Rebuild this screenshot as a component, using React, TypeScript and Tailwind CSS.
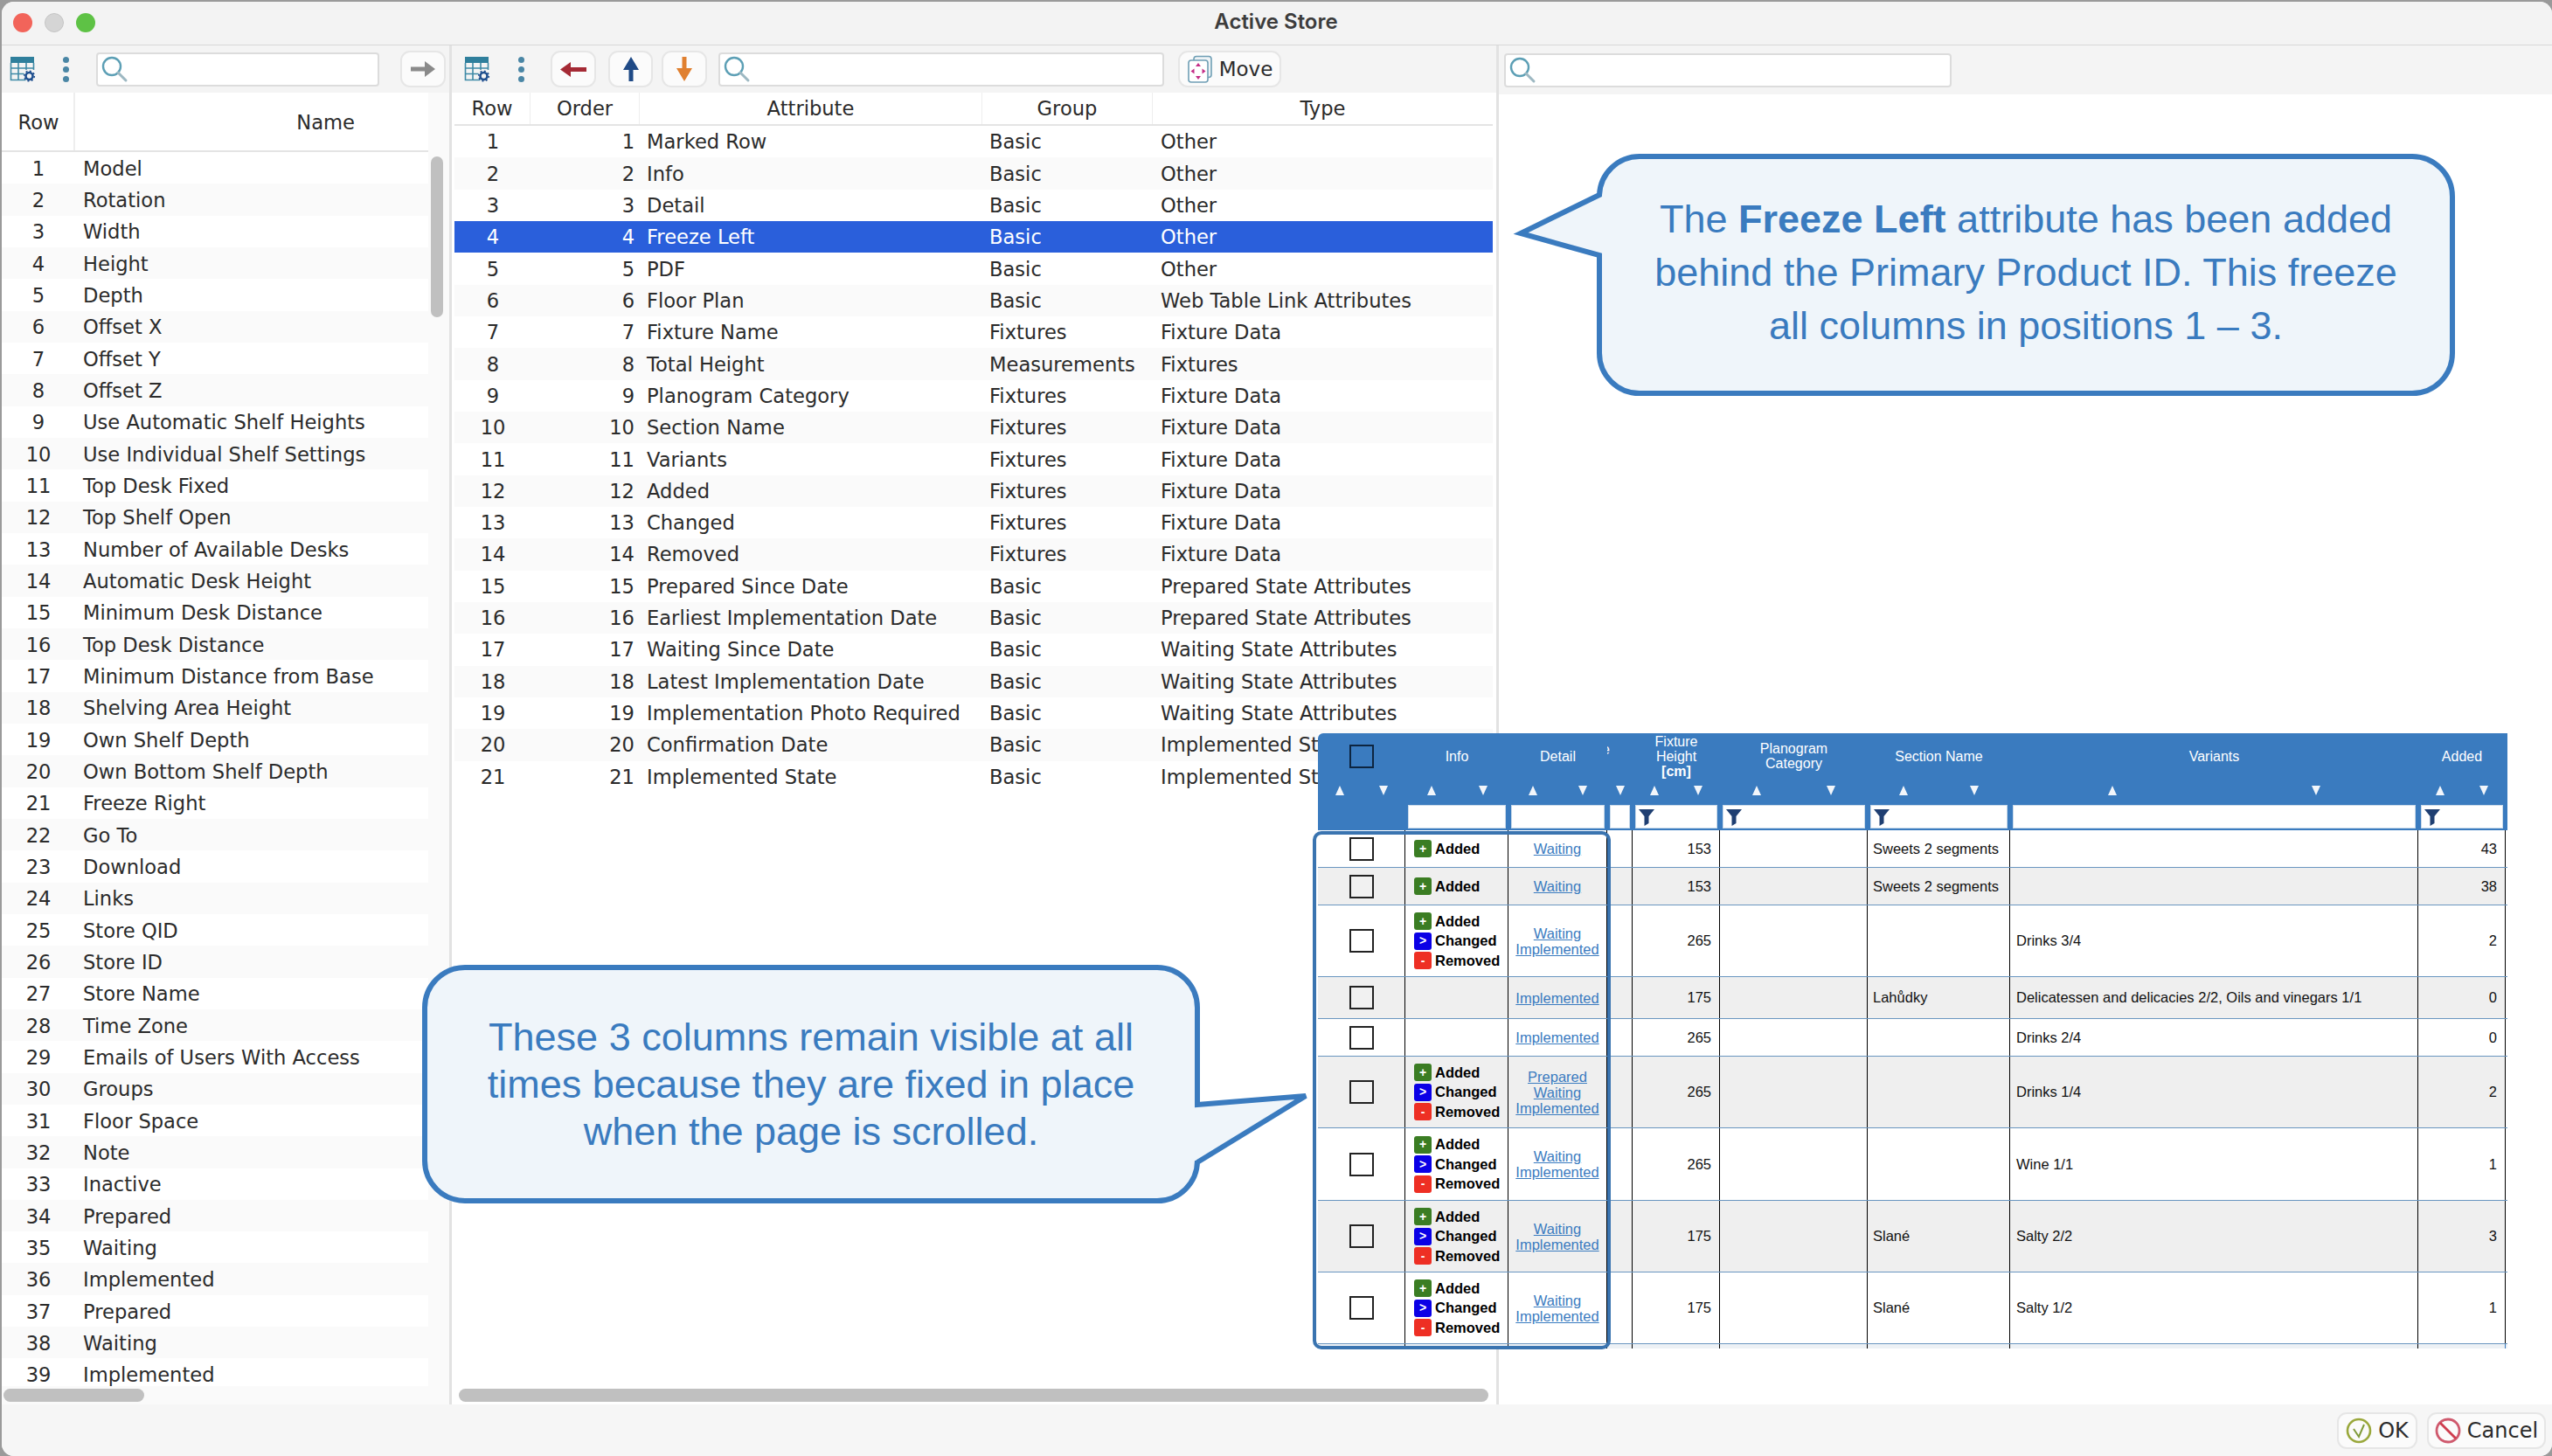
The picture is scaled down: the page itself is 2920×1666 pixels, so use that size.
const leftRows = ["Model","Rotation","Width","Height","Depth","Offset X","Offset Y","Offset Z","Use Automatic Shelf Heights","Use Individual Shelf Settings","Top Desk Fixed","Top Shelf Open","Number of Available Desks","Automatic Desk Height","Minimum Desk Distance","Top Desk Distance","Minimum Distance from Base","Shelving Area Height","Own Shelf Depth","Own Bottom Shelf Depth","Freeze Right","Go To","Download","Links","Store QID","Store ID","Store Name","Time Zone","Emails of Users With Access","Groups","Floor Space","Note","Inactive","Prepared","Waiting","Implemented","Prepared","Waiting","Implemented"];

const midRows = [
  ["Marked Row","Basic","Other"],["Info","Basic","Other"],["Detail","Basic","Other"],["Freeze Left","Basic","Other"],["PDF","Basic","Other"],
  ["Floor Plan","Basic","Web Table Link Attributes"],["Fixture Name","Fixtures","Fixture Data"],["Total Height","Measurements","Fixtures"],
  ["Planogram Category","Fixtures","Fixture Data"],["Section Name","Fixtures","Fixture Data"],["Variants","Fixtures","Fixture Data"],["Added","Fixtures","Fixture Data"],
  ["Changed","Fixtures","Fixture Data"],["Removed","Fixtures","Fixture Data"],["Prepared Since Date","Basic","Prepared State Attributes"],
  ["Earliest Implementation Date","Basic","Prepared State Attributes"],["Waiting Since Date","Basic","Waiting State Attributes"],["Latest Implementation Date","Basic","Waiting State Attributes"],
  ["Implementation Photo Required","Basic","Waiting State Attributes"],["Confirmation Date","Basic","Implemented State Attributes"],["Implemented State","Basic","Implemented State Attributes"],
];

const shotCols = "grid grid-cols-[100px_118px_113px_29px_100px_169px_163px_467px_100px]";

const shotRows = [
  { h: "h-[43px]", badges: 1, links: ["Waiting"], height: 153, section: "Sweets 2 segments", variants: "", added: 43 },
  { h: "h-[43px]", badges: 1, links: ["Waiting"], height: 153, section: "Sweets 2 segments", variants: "", added: 38 },
  { h: "h-[82px]", badges: 3, links: ["Waiting","Implemented"], height: 265, section: "", variants: "Drinks 3/4", added: 2 },
  { h: "h-[48px]", badges: 0, links: ["Implemented"], height: 175, section: "Lahůdky", variants: "Delicatessen and delicacies 2/2, Oils and vinegars 1/1", added: 0 },
  { h: "h-[43px]", badges: 0, links: ["Implemented"], height: 265, section: "", variants: "Drinks 2/4", added: 0 },
  { h: "h-[82px]", badges: 3, links: ["Prepared","Waiting","Implemented"], height: 265, section: "", variants: "Drinks 1/4", added: 2 },
  { h: "h-[83px]", badges: 3, links: ["Waiting","Implemented"], height: 265, section: "", variants: "Wine 1/1", added: 1 },
  { h: "h-[82px]", badges: 3, links: ["Waiting","Implemented"], height: 175, section: "Slané", variants: "Salty 2/2", added: 3 },
  { h: "h-[82px]", badges: 3, links: ["Waiting","Implemented"], height: 175, section: "Slané", variants: "Salty 1/2", added: 1 },
];

function TableIcon() {
  return (
    <svg width="30" height="30" viewBox="0 0 30 30" className="shrink-0">
      <rect x="1" y="1" width="27" height="7" fill="#2f7f9c" />
      <path d="M1.5 8v19.5h17M1.5 14h26M1.5 20.5h15M10 8v19M19 8v8M27.5 8v8" fill="none" stroke="#3f8aa6" strokeWidth="1.6" />
      <circle cx="22.5" cy="23" r="4" fill="none" stroke="#1f4f8f" strokeWidth="2.6" />
      <circle cx="22.5" cy="23" r="5.8" fill="none" stroke="#1f4f8f" strokeWidth="1.6" strokeDasharray="2 2.5" />
    </svg>
  );
}

function Dots() {
  return (
    <div className="flex flex-col gap-[4px] shrink-0">
      <div className="w-[7px] h-[7px] rounded-full bg-[#4a86a5]" />
      <div className="w-[7px] h-[7px] rounded-full bg-[#4a86a5]" />
      <div className="w-[7px] h-[7px] rounded-full bg-[#4a86a5]" />
    </div>
  );
}

function SearchBox({ className }: { className: string }) {
  return (
    <div className={`h-[39px] bg-white border-2 border-[#dcdcdc] rounded-[4px] flex items-center pl-[3px] shrink-0 ${className}`}>
      <svg width="32" height="32" viewBox="0 0 32 32">
        <circle cx="13" cy="13" r="10" fill="none" stroke="#5c9fb5" strokeWidth="2.4" />
        <path d="M20 20l9 9" stroke="#9db8c2" strokeWidth="3" strokeLinecap="round" />
      </svg>
    </div>
  );
}

function ToolButton({ className, children }: { className: string; children: React.ReactNode }) {
  return (
    <div className={`h-[42px] bg-[#fbfbfb] border-2 border-[#e6e6e6] rounded-[11px] flex items-center justify-center shrink-0 ${className}`}>
      {children}
    </div>
  );
}

function MoveIcon() {
  return (
    <svg width="30" height="32" viewBox="0 0 30 32">
      <rect x="8" y="1.5" width="20" height="24" rx="3" fill="#eef3f6" stroke="#6f9fb5" strokeWidth="1.6" />
      <rect x="2" y="6" width="22" height="25" rx="3" fill="#fff" stroke="#6f9fb5" strokeWidth="1.6" />
      <path d="M13 9l3 4h-6zM13 28l3-4h-6zM4.500 18.500l4-3v6zM21.500 18.500l-4-3v6z" fill="#c42c86" />
    </svg>
  );
}

function Funnel() {
  return (
    <svg width="18" height="19" viewBox="0 0 18 19" className="absolute left-[3px] top-[4px]">
      <path d="M0 0h18l-6.500 8v8l-5 3V8z" fill="#1f3f72" />
    </svg>
  );
}

function Sort({ up }: { up?: boolean }) {
  return (
    <svg width="10" height="11" viewBox="0 0 10 11">
      <path d={up ? "M5 0l5 11H0z" : "M0 0h10L5 11z"} fill="#f2f6fb" />
    </svg>
  );
}

function SortCell({ hideUp }: { hideUp?: boolean }) {
  return (
    <div className="flex justify-around items-center h-[26px]">
      {!hideUp && <Sort up />}
      <Sort />
    </div>
  );
}

function FilterCell({ funnel }: { funnel?: boolean }) {
  return (
    <div className="relative mx-[3px] h-[27px] bg-white border border-[#c9daea]">
      {funnel && <Funnel />}
    </div>
  );
}

function Badge({ kind }: { kind: number }) {
  const label = ["Added", "Changed", "Removed"][kind];
  const sign = ["+", ">", "-"][kind];
  const color = ["bg-[#3b7d23]", "bg-[#0b00e6]", "bg-[#ee2f24]"][kind];
  return (
    <div className="flex items-center h-[22.500px]">
      <div className={`w-[20px] h-[20px] rounded-[3px] text-white text-[14px] font-bold flex items-center justify-center ${color}`}>{sign}</div>
      <span className="ml-[4px] text-[16.500px] font-bold text-black">{label}</span>
    </div>
  );
}

function Shot() {
  const head = "flex items-center justify-center text-center text-white text-[16px] leading-[17px] h-[52px]";
  return (
    <div className="absolute left-[1508px] top-[839px] w-[1361px] h-[704px] bg-white overflow-hidden font-['Liberation_Sans',sans-serif]">
      <div className="bg-[#3a7bbf] h-[111px] rounded-tl-[6px]">
        <div className={shotCols}>
          <div className={head}><div className="w-[28px] h-[27px] border-2 border-[#0d2540]" /></div>
          <div className={head}>Info</div>
          <div className={head}>Detail</div>
          <div className="h-[52px] overflow-hidden text-white text-[16px] leading-[17px] pt-[10px]"><span className="block -ml-[6px]">e</span></div>
          <div className={head}><div className="w-[60px]">Fixture Height <b>[cm]</b></div></div>
          <div className={head}><div className="w-[100px]">Planogram Category</div></div>
          <div className={head}>Section Name</div>
          <div className={head}>Variants</div>
          <div className={head}>Added</div>
        </div>
        <div className={shotCols}>
          <SortCell /><SortCell /><SortCell /><SortCell hideUp /><SortCell /><SortCell /><SortCell /><SortCell /><SortCell />
        </div>
        <div className={`${shotCols} pt-[4px]`}>
          <div />
          <FilterCell /><FilterCell /><FilterCell /><FilterCell funnel /><FilterCell funnel /><FilterCell funnel /><FilterCell /><FilterCell funnel />
        </div>
      </div>
      {shotRows.map((r, i) => {
        const cell = `border-r border-black flex items-center text-[16.500px] text-[#111] ${i % 2 ? "bg-[#efefef]" : "bg-white"}`;
        return (
          <div key={i} className={`${shotCols} ${r.h} border-b border-[#6a96c0]`}>
            <div className={`${cell} justify-center`}>
              <div className={`w-[28px] h-[27px] border-2 border-[#222] ${i % 2 ? "bg-[#f1f1f1]" : "bg-white"}`} />
            </div>
            <div className={`${cell} pl-[10px]`}>
              <div>
                {Array.from({ length: r.badges }).map((_, k) => <Badge key={k} kind={k} />)}
              </div>
            </div>
            <div className={`${cell} justify-center`}>
              <div className="text-center text-[16.500px] leading-[18px] text-[#3a7bbf] underline">
                {r.links.map((l) => <div key={l}>{l}</div>)}
              </div>
            </div>
            <div className={cell} />
            <div className={`${cell} justify-end pr-[9px]`}>{r.height}</div>
            <div className={cell} />
            <div className={`${cell} pl-[6px]`}>{r.section}</div>
            <div className={`${cell} pl-[7px]`}>{r.variants}</div>
            <div className={`${cell} justify-end pr-[9px] border-[#3a7bbf]`}>{r.added}</div>
          </div>
        );
      })}
      <div className={`${shotCols} h-[5px] bg-[#edf1f5]`}>
        <div className="border-r border-black" /><div className="border-r border-black" /><div className="border-r border-black" />
        <div className="border-r border-black" /><div className="border-r border-black" /><div className="border-r border-black" />
        <div className="border-r border-black" /><div className="border-r border-black" /><div className="border-r border-[#3a7bbf]" />
      </div>
    </div>
  );
}

export default function App() {
  const rowText = "font-['DejaVu_Sans',sans-serif] text-[22.600px] text-[#2b2b2b]";
  return (
    <div className="w-[2920px] h-[1666px] bg-[#9a9a9a] overflow-hidden relative">
      <div className="w-[2918px] h-[1664px] ml-[2px] mt-[2px] rounded-[14px] overflow-hidden bg-[#f6f6f6] flex flex-col">
        {/* title bar */}
        <div className="h-[50px] bg-[#f3f3f3] border-b border-[#d8d8d8] flex items-center relative shrink-0">
          <div className="flex gap-[14px] pl-[13px] -mt-[2px]">
            <div className="w-[22px] h-[22px] rounded-full bg-[#f2645a]" />
            <div className="w-[22px] h-[22px] rounded-full bg-[#d5d5d5] border border-[#c4c4c4]" />
            <div className="w-[22px] h-[22px] rounded-full bg-[#5ec245]" />
          </div>
          <div className="absolute left-0 right-0 text-center text-[24px] font-semibold text-[#3c3c3c] font-['Inter',sans-serif] -mt-[3px] pr-[2px]">Active Store</div>
        </div>

        <div className="flex flex-1 min-h-0">
          {/* left panel */}
          <div className="w-[512px] flex flex-col relative bg-[#fafafa]">
            <div className="h-[54px] bg-[#f4f4f4] flex items-center pl-[9px] shrink-0">
              <TableIcon />
              <div className="ml-[31px]"><Dots /></div>
              <SearchBox className="ml-[31px] w-[324px]" />
              <ToolButton className="ml-[24px] w-[52px]">
                <svg width="28" height="18" viewBox="0 0 28 18"><path d="M0 6.500h16V0l12 9-12 9v-6.500H0z" fill="#8a8a8a" /></svg>
              </ToolButton>
            </div>
            <div className="w-[488px] h-[68px] flex bg-white border-b-2 border-[#e4e4e4] shrink-0 font-['DejaVu_Sans',sans-serif] text-[22.600px] text-[#2b2b2b]">
              <div className="w-[84px] border-r-2 border-[#eeeeee] flex items-center justify-center pl-[2px] pt-[4px]">Row</div>
              <div className="flex-1 flex items-center justify-end pr-[84px] pt-[4px]">Name</div>
            </div>
            <div className="w-[488px] h-[1412px] overflow-hidden">
              {leftRows.map((name, i) => (
                <div key={i} className={`flex items-center h-[36.330px] pt-[3px] ${rowText} ${i % 2 ? "bg-[#fafafa]" : "bg-white"}`}>
                  <div className="w-[84px] text-center">{i + 1}</div>
                  <div className="pl-[9px]">{name}</div>
                </div>
              ))}
            </div>
            <div className="absolute left-[491px] top-[127px] w-[14px] h-[184px] rounded-full bg-[#c0c0c0]" />
            <div className="absolute left-[2px] top-[1537px] w-[161px] h-[15px] rounded-full bg-[#c0c0c0]" />
          </div>
          <div className="w-[3px] bg-[#e2e2e2]" />

          {/* middle panel */}
          <div className="w-[1195px] flex flex-col relative bg-white">
            <div className="h-[54px] bg-[#f4f4f4] flex items-center pl-[14px] shrink-0">
              <TableIcon />
              <div className="ml-[32px]"><Dots /></div>
              <ToolButton className="ml-[30px] w-[52px]">
                <svg width="30" height="17" viewBox="0 0 30 17"><path d="M30 6H12V0L0 8.500 12 17v-6h18z" fill="#a52a35" /></svg>
              </ToolButton>
              <ToolButton className="ml-[14px] w-[51px]">
                <svg width="20" height="28" viewBox="0 0 20 28"><path d="M10 0l9 15h-6.500v13h-5V15H1z" fill="#1f4a86" /></svg>
              </ToolButton>
              <ToolButton className="ml-[10px] w-[52px]">
                <svg width="20" height="28" viewBox="0 0 20 28"><path d="M10 28l9-15h-6.500V0h-5v13H1z" fill="#e08030" /></svg>
              </ToolButton>
              <SearchBox className="ml-[13px] w-[510px]" />
              <ToolButton className="ml-[16px] w-[118px] gap-[7px]">
                <MoveIcon />
                <span className="text-[23px] text-[#2b2b2b] font-['DejaVu_Sans',sans-serif]">Move</span>
              </ToolButton>
            </div>
            <div className="ml-[3px] w-[1188px] h-[38px] flex border-b-2 border-[#e4e4e4] shrink-0 font-['DejaVu_Sans',sans-serif] text-[22.600px] text-[#2b2b2b] bg-white">
              <div className="w-[87px] border-r border-[#eeeeee] flex items-center justify-center pt-[2px]">Row</div>
              <div className="w-[125px] border-r border-[#eeeeee] flex items-center justify-center pt-[2px]">Order</div>
              <div className="w-[392px] border-r border-[#eeeeee] flex items-center justify-center pt-[2px]">Attribute</div>
              <div className="w-[195px] border-r border-[#eeeeee] flex items-center justify-center pt-[2px]">Group</div>
              <div className="flex-1 flex items-center justify-center pt-[2px]">Type</div>
            </div>
            <div className="ml-[3px] w-[1188px] flex-1">
              {midRows.map((r, i) => (
                <div key={i} className={`flex items-center h-[36.330px] pt-[2px] font-['DejaVu_Sans',sans-serif] text-[22.600px] ${i === 3 ? "bg-[#2a5fdb] text-white" : i % 2 ? "bg-[#fafafa] text-[#2b2b2b]" : "bg-white text-[#2b2b2b]"}`}>
                  <div className="w-[88px] text-center">{i + 1}</div>
                  <div className="w-[118px] text-right">{i + 1}</div>
                  <div className="w-[406px] pl-[14px]">{r[0]}</div>
                  <div className="w-[196px]">{r[1]}</div>
                  <div>{r[2]}</div>
                </div>
              ))}
            </div>
            <div className="absolute left-[8px] top-[1537px] w-[1178px] h-[15px] rounded-full bg-[#c0c0c0]" />
          </div>
          <div className="w-[3px] bg-[#e2e2e2]" />

          {/* right panel */}
          <div className="flex-1 flex flex-col bg-white">
            <div className="h-[56px] bg-[#f4f4f4] flex items-center pl-[6px] shrink-0">
              <SearchBox className="w-[512px]" />
            </div>
          </div>
        </div>

        {/* footer */}
        <div className="h-[59px] bg-[#f6f6f6] flex items-center justify-end gap-[11px] pr-[7px] shrink-0 font-['DejaVu_Sans',sans-serif] text-[24px] text-[#2b2b2b]">
          <ToolButton className="w-[92px] gap-[7px]">
            <svg width="30" height="30" viewBox="0 0 30 30">
              <circle cx="15" cy="15" r="13" fill="none" stroke="#9aa83c" strokeWidth="2.6" />
              <path d="M9 13l6 9 6-14" fill="none" stroke="#7f9a3a" strokeWidth="2" />
            </svg>
            <span>OK</span>
          </ToolButton>
          <ToolButton className="w-[136px] gap-[7px]">
            <svg width="30" height="30" viewBox="0 0 30 30">
              <circle cx="15" cy="15" r="13" fill="none" stroke="#cf5a6e" strokeWidth="2.8" />
              <path d="M6 6l18 18" stroke="#cf3d4f" strokeWidth="2.8" />
            </svg>
            <span>Cancel</span>
          </ToolButton>
        </div>
      </div>

      <Shot />
      {/* frame around the frozen columns */}
      <div className="absolute left-[1502px] top-[951px] w-[341px] h-[593px] border-[4px] border-[#3a74b0] rounded-[10px]" />

      {/* callouts */}
      <div className="absolute left-[1728px] top-[173px] w-[1085px] h-[283px] font-['Liberation_Sans',sans-serif] text-[#3a7bbf]">
        <svg width="1085" height="283" className="absolute inset-0">
          <path d="M148 6H1032A46 46 0 0 1 1078 52V231A46 46 0 0 1 1032 277H148A46 46 0 0 1 102 231V119L12 94L102 50A46 46 0 0 1 148 6Z" fill="#eff5fa" stroke="#3a7bbf" strokeWidth="6" />
        </svg>
        <div className="absolute left-[102px] top-0 w-[976px] h-[277px] flex flex-col items-center justify-center text-center text-[45px] leading-[61px]">
          <div>The <b>Freeze Left</b> attribute has been added</div>
          <div>behind the Primary Product ID. This freeze</div>
          <div>all columns in positions 1 – 3.</div>
        </div>
      </div>
      <div className="absolute left-[480px] top-[1101px] w-[1030px] h-[279px] font-['Liberation_Sans',sans-serif] text-[#3a7bbf]">
        <svg width="1030" height="279" className="absolute inset-0">
          <path d="M52 6H844A46 46 0 0 1 890 52V163L1014 153L890 229V227A46 46 0 0 1 844 273H52A46 46 0 0 1 6 227V52A46 46 0 0 1 52 6Z" fill="#eff5fa" stroke="#3a7bbf" strokeWidth="6" />
        </svg>
        <div className="absolute left-[6px] top-0 w-[884px] h-[279px] flex flex-col items-center justify-center text-center text-[45px] leading-[54px]">
          <div>These 3 columns remain visible at all</div>
          <div>times because they are fixed in place</div>
          <div>when the page is scrolled.</div>
        </div>
      </div>
    </div>
  );
}
